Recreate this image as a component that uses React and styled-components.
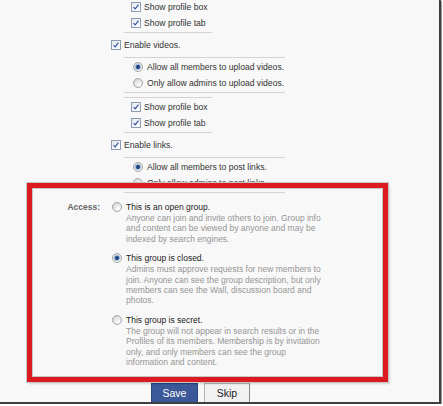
import styled, { createGlobalStyle } from 'styled-components';

const GlobalStyle = createGlobalStyle`
	body {
		margin: 0;
		background: #ffffff;
	}
`;

const Checkbox = () => (
	<svg width='10' height='10' viewBox='0 0 10 10'>
		<defs>
			<linearGradient id='cbg' x1='0' y1='0' x2='1' y2='1'>
				<stop offset='0' stopColor='#e3e7ee' />
				<stop offset='1' stopColor='#ffffff' />
			</linearGradient>
		</defs>
		<rect x='0.5' y='0.5' width='9' height='9' fill='url(#cbg)' stroke='#8d9bb3' />
		<path d='M2.6 5.1 L4.2 6.9 L7.4 2.6' fill='none' stroke='#3550a6' strokeWidth='1.1' />
	</svg>
);

const Radio = ({ checked }) => (
	<svg width='10' height='10' viewBox='0 0 10 10'>
		<defs>
			<radialGradient id='rbg' cx='0.65' cy='0.7' r='0.7'>
				<stop offset='0' stopColor='#ffffff' />
				<stop offset='1' stopColor='#d6d6d6' />
			</radialGradient>
		</defs>
		<circle cx='5' cy='5' r='4.5' fill='url(#rbg)' stroke='#a8a8a8' />
		{checked && (
			<>
				<circle cx='5' cy='5' r='2.8' fill='#7aa6d8' />
				<circle cx='5' cy='5' r='1.9' fill='#1d3f78' />
			</>
		)}
	</svg>
);

const Frame = styled.div`
	position: relative;
	width: 439px;
	height: 402px;
	overflow: hidden;
	background: #f8f8f8;
	border-right: 2px solid #3f3f3f;
	border-bottom: 2px solid #3f3f3f;
	box-shadow: 1px 1px 0 #9a9a9a;
	font-family: 'Liberation Sans', Arial, sans-serif;
	font-size: 8.6px;
	color: #333;
`;

const Options = styled.div`
	padding-left: 111px;
`;

const TopRow = styled.label`
	display: flex;
	align-items: center;
	gap: 3px;
	height: 24px;
`;

const SubGroup = styled.div`
	width: ${(p) => p.$width}px;
	margin-left: 13px;
	margin-top: ${(p) => p.$top || 0}px;
	padding: 1px 0;
	border-top: 1px solid #d4d4d4;
	border-bottom: 1px solid #d4d4d4;
`;

const SubRow = styled.label`
	display: flex;
	align-items: center;
	gap: ${(p) => (p.$radio ? 4 : 3)}px;
	height: 16px;
	padding-left: ${(p) => (p.$radio ? 9 : 7)}px;
	white-space: nowrap;
`;

const Access = styled.div`
	display: grid;
	grid-template-columns: 68px 1fr;
	column-gap: 12px;
	padding: 8px 0 0 32px;
`;

const AccessLabel = styled.div`
	text-align: right;
	font-weight: bold;
	color: #666;
	line-height: 12px;
	font-size: 8.5px;
`;

const Choices = styled.div`
	display: flex;
	flex-direction: column;
	gap: 8px;
`;

const Choice = styled.div`
	display: grid;
	grid-template-columns: 9px 1fr;
	column-gap: 5px;
	align-items: start;

	svg {
		margin-top: 1px;
	}
`;

const ChoiceTitle = styled.div`
	line-height: 12px;
	font-size: 8.5px;
	color: #222;
`;

const ChoiceText = styled.div`
	line-height: 10.4px;
	font-size: 8.5px;
	color: #959595;
	white-space: nowrap;
`;

const Buttons = styled.div`
	display: flex;
	gap: 6px;
	margin: 16px 0 0 151px;
`;

const Button = styled.button`
	width: ${(p) => p.$width}px;
	height: 22px;
	padding: 0 0 3px;
	font-family: 'Liberation Sans', Arial, sans-serif;
	font-size: 10.5px;
	border: 1px solid ${(p) => (p.$primary ? '#29447e' : '#b5b5b5')};
	border-right-color: ${(p) => (p.$primary ? '#29447e' : '#8c8c8c')};
	background: ${(p) => (p.$primary ? '#3b5998' : '#f1f1f1')};
	color: ${(p) => (p.$primary ? '#ffffff' : '#222222')};
`;

const Highlight = styled.div`
	position: absolute;
	left: 27px;
	top: 183px;
	width: 361px;
	height: 199px;
	box-sizing: border-box;
	border: 5px solid #dc1a22;
	box-shadow: 0 0 0 1px #c6c6c6, inset 0 0 0 1px #c6c6c6, 2px 2px 2px rgba(0, 0, 0, 0.15);
	pointer-events: none;
`;

const choices = [
	{
		title: 'This is an open group.',
		lines: [
			'Anyone can join and invite others to join. Group info',
			'and content can be viewed by anyone and may be',
			'indexed by search engines.',
		],
	},
	{
		title: 'This group is closed.',
		checked: true,
		lines: [
			'Admins must approve requests for new members to',
			'join. Anyone can see the group description, but only',
			'members can see the Wall, discussion board and',
			'photos.',
		],
	},
	{
		title: 'This group is secret.',
		lines: [
			'The group will not appear in search results or in the',
			'Profiles of its members. Membership is by invitation',
			'only, and only members can see the group',
			'information and content.',
		],
	},
];

const App = () => {
	return (
		<>
			<GlobalStyle />
			<Frame>
				<Options>
					<SubGroup $width={88} $top={-3}>
						<SubRow>
							<Checkbox /> Show profile box
						</SubRow>
						<SubRow>
							<Checkbox /> Show profile tab
						</SubRow>
					</SubGroup>
					<TopRow>
						<Checkbox /> Enable videos.
					</TopRow>
					<SubGroup $width={161}>
						<SubRow $radio>
							<Radio checked /> Allow all members to upload videos.
						</SubRow>
						<SubRow $radio>
							<Radio /> Only allow admins to upload videos.
						</SubRow>
					</SubGroup>
					<SubGroup $width={88} $top={4}>
						<SubRow>
							<Checkbox /> Show profile box
						</SubRow>
						<SubRow>
							<Checkbox /> Show profile tab
						</SubRow>
					</SubGroup>
					<TopRow>
						<Checkbox /> Enable links.
					</TopRow>
					<SubGroup $width={161}>
						<SubRow $radio>
							<Radio checked /> Allow all members to post links.
						</SubRow>
						<SubRow $radio>
							<Radio /> Only allow admins to post links.
						</SubRow>
					</SubGroup>
				</Options>
				<Access>
					<AccessLabel>Access:</AccessLabel>
					<Choices>
						{choices.map((c) => (
							<Choice key={c.title}>
								<Radio checked={c.checked} />
								<div>
									<ChoiceTitle>{c.title}</ChoiceTitle>
									{c.lines.map((l) => (
										<ChoiceText key={l}>{l}</ChoiceText>
									))}
								</div>
							</Choice>
						))}
					</Choices>
				</Access>
				<Buttons>
					<Button $primary $width={47}>
						Save
					</Button>
					<Button $width={46}>Skip</Button>
				</Buttons>
				<Highlight />
			</Frame>
		</>
	);
};

export default App;
